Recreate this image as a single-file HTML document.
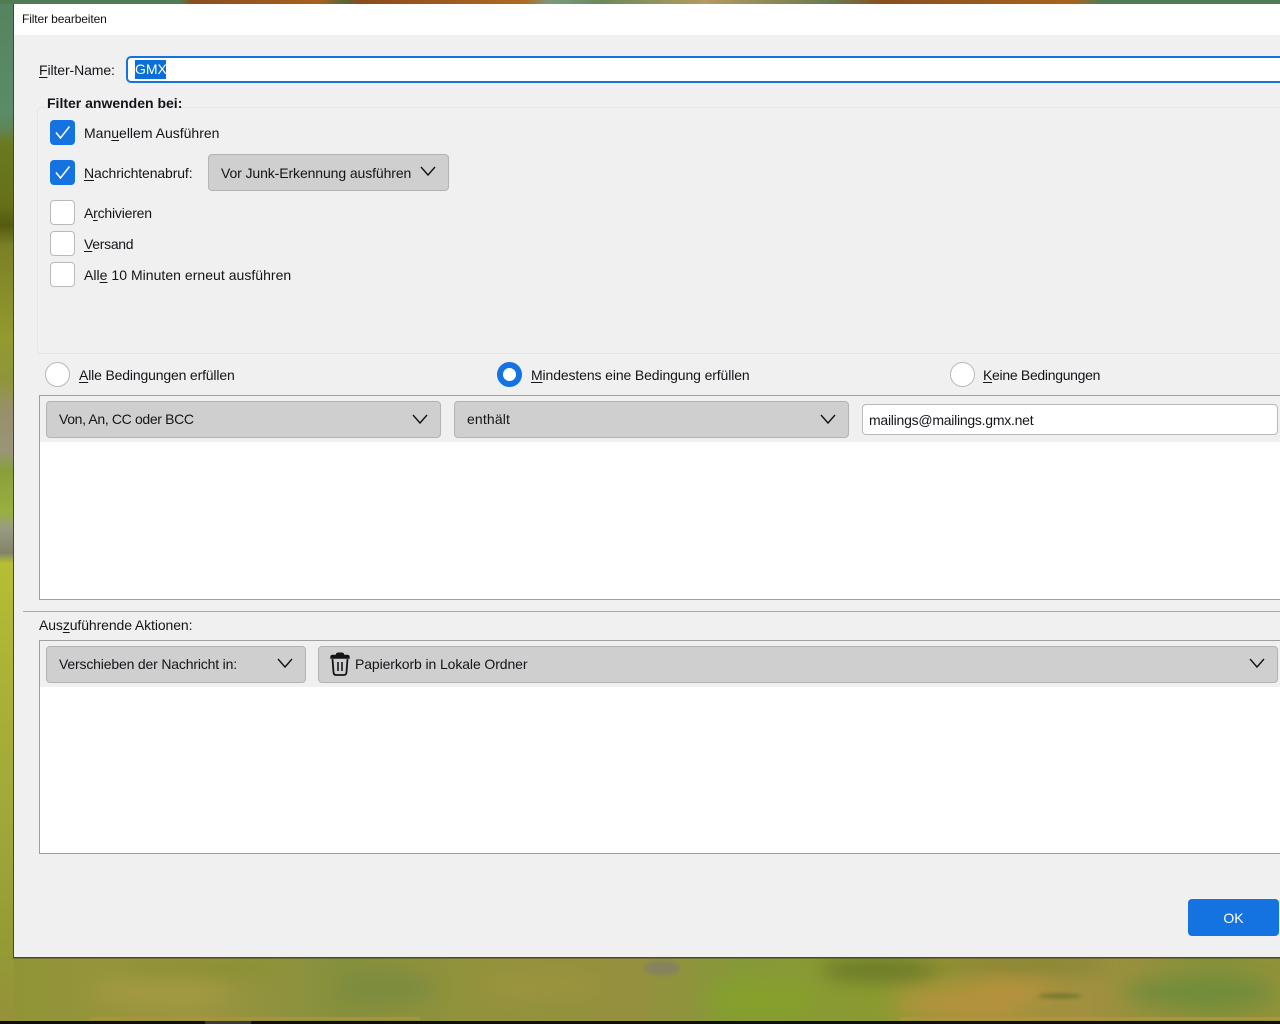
<!DOCTYPE html>
<html><head><meta charset="utf-8"><style>
html,body{margin:0;padding:0;width:1280px;height:1024px;overflow:hidden;background:#000}
body{position:relative;font-family:"Liberation Sans",sans-serif;font-size:14px;color:#15141a}
.a{position:absolute;white-space:nowrap}
.t{position:absolute;white-space:nowrap;line-height:18px}
u{text-underline-offset:2px;text-decoration-thickness:1px}
.cb{position:absolute;left:50px;width:23px;height:23px;background:#fff;border:1px solid #b9b9b9;border-radius:4px}
.cb.on{background:#1473e0;border-color:#1473e0}
.cb svg{position:absolute;left:0;top:0}
.r{position:absolute;width:23px;height:23px;border-radius:50%;background:#fff;border:1px solid #b9b9b9;top:362px}
.sel{position:absolute;background:#cfcfcf;border:1px solid #b3b3b3;border-radius:4px;box-sizing:border-box}
.sel span{position:absolute;left:12px;top:8px;line-height:18px;white-space:nowrap}
.sel svg{position:absolute}
</style></head><body>
<svg class="a" style="left:0;top:0" width="1280" height="1024" viewBox="0 0 1280 1024">
<defs>
<linearGradient id="l" gradientUnits="userSpaceOnUse" x1="0" y1="0" x2="0" y2="1024">
<stop offset="0" stop-color="#56835f"/><stop offset=".11" stop-color="#5a8c68"/><stop offset=".125" stop-color="#5f8558"/><stop offset=".14" stop-color="#6a7a20"/><stop offset=".2" stop-color="#667018"/><stop offset=".22" stop-color="#555a12"/><stop offset=".24" stop-color="#7a8024"/><stop offset=".33" stop-color="#929a30"/><stop offset=".37" stop-color="#8f9638"/><stop offset=".4" stop-color="#98906a"/><stop offset=".44" stop-color="#9a9578"/><stop offset=".46" stop-color="#88a038"/><stop offset=".5" stop-color="#98b040"/><stop offset=".515" stop-color="#9a9c80"/><stop offset=".54" stop-color="#83836a"/><stop offset=".55" stop-color="#b4bf34"/><stop offset=".66" stop-color="#aab237"/><stop offset=".8" stop-color="#a0a83a"/><stop offset=".93" stop-color="#949a34"/><stop offset="1" stop-color="#96903a"/>
</linearGradient>
<linearGradient id="t" gradientUnits="userSpaceOnUse" x1="0" y1="0" x2="1280" y2="0">
<stop offset="0" stop-color="#4f7c55"/><stop offset=".14" stop-color="#4f7c55"/><stop offset=".15" stop-color="#8a4f1d"/><stop offset=".25" stop-color="#a8601f"/><stop offset=".27" stop-color="#53683a"/><stop offset=".28" stop-color="#8a4a1c"/><stop offset=".41" stop-color="#b06a24"/><stop offset=".43" stop-color="#7a9a80"/><stop offset=".47" stop-color="#6a8a5a"/><stop offset=".55" stop-color="#b59a60"/><stop offset=".65" stop-color="#6a7a50"/><stop offset=".69" stop-color="#8a4f1d"/><stop offset=".84" stop-color="#a8641f"/><stop offset=".86" stop-color="#4f7c55"/><stop offset="1" stop-color="#4f7c55"/>
</linearGradient>
<linearGradient id="b" gradientUnits="userSpaceOnUse" x1="0" y1="0" x2="1280" y2="0">
<stop offset="0" stop-color="#8f9436"/><stop offset=".15" stop-color="#9b9540"/><stop offset=".27" stop-color="#86903c"/><stop offset=".38" stop-color="#93923c"/><stop offset=".5" stop-color="#94903e"/><stop offset=".58" stop-color="#86993a"/><stop offset=".68" stop-color="#8b9a30"/><stop offset=".78" stop-color="#a6913c"/><stop offset=".85" stop-color="#a09040"/><stop offset=".95" stop-color="#85903a"/><stop offset="1" stop-color="#90923a"/>
</linearGradient>
<filter id="bl" x="-30%" y="-60%" width="160%" height="220%"><feGaussianBlur stdDeviation="9"/></filter>
<filter id="bs"><feGaussianBlur stdDeviation="2"/></filter>
</defs>
<rect width="1280" height="1024" fill="url(#b)"/>
<rect width="14" height="1024" fill="url(#l)"/>
<rect width="1280" height="4" fill="url(#t)"/>
<g filter="url(#bl)" opacity=".85">
<ellipse cx="160" cy="992" rx="70" ry="14" fill="#a59a42"/>
<ellipse cx="200" cy="968" rx="80" ry="8" fill="#84902f"/>
<ellipse cx="385" cy="988" rx="50" ry="16" fill="#7a8b3f"/>
<ellipse cx="540" cy="985" rx="60" ry="14" fill="#9c9440"/>
<ellipse cx="760" cy="1000" rx="55" ry="22" fill="#86a12c"/>
<ellipse cx="880" cy="970" rx="60" ry="12" fill="#667628"/>
<ellipse cx="960" cy="1003" rx="65" ry="14" fill="#b7933e"/>
<ellipse cx="1010" cy="990" rx="40" ry="10" fill="#b7933e"/>
<ellipse cx="1020" cy="965" rx="90" ry="6" fill="#6f7e2e"/>
<ellipse cx="1200" cy="992" rx="75" ry="14" fill="#6c8c3a"/>
</g>
<g filter="url(#bs)">
<ellipse cx="662" cy="968" rx="18" ry="7" fill="#85825e"/>
<ellipse cx="1060" cy="996" rx="22" ry="2" fill="#6a6f2c"/>
</g>
<rect x="90" y="1017" width="330" height="3" fill="#b0903c"/>
<rect x="900" y="1017" width="380" height="3" fill="#b3923e"/>
<rect y="1021" width="1280" height="3" fill="#0f0f0a"/>
<rect x="205" y="1021" width="46" height="3" fill="#3a3a3a"/>
<rect x="13" y="4" width="1" height="954" fill="#3f4a2c"/>
<rect x="13" y="957" width="1267" height="1.5" fill="#4a4a28"/>
</svg>

<div class="a" style="left:14px;top:4px;width:1266px;height:953px;background:#f0f0f0"></div>
<div class="a" style="left:14px;top:4px;width:1266px;height:31px;background:#fff"></div>
<div class="t" style="left:22px;top:10px;font-size:12px;color:#111;letter-spacing:-.12px">Filter bearbeiten</div>

<div class="t" style="left:39px;top:61px;letter-spacing:-.1px"><u>F</u>ilter-Name:</div>
<div class="a" style="left:126px;top:56px;width:1160px;height:27px;box-sizing:border-box;background:#fff;border:2px solid #1473e0;border-radius:5px"></div>
<div class="t" style="left:135px;top:60px;width:31px;height:19px;line-height:19px;background:#0a6fd6;color:#fff;font-size:14px">GMX</div>

<div class="a" style="left:37px;top:107px;width:1250px;height:247px;box-sizing:border-box;border:1px solid #e6e6e6;border-radius:4px"></div>
<div class="t" style="left:47px;top:94px;font-weight:bold">Filter anwenden bei:</div>

<div class="cb on" style="top:120px"><svg width="23" height="23"><path d="M5 11.5 L9.5 17 L18.5 5.5" fill="none" stroke="#fff" stroke-width="1.5"/></svg></div>
<div class="t" style="left:84px;top:124px">Man<u>u</u>ellem Ausführen</div>
<div class="cb on" style="top:160px"><svg width="23" height="23"><path d="M5 11.5 L9.5 17 L18.5 5.5" fill="none" stroke="#fff" stroke-width="1.5"/></svg></div>
<div class="t" style="left:84px;top:164px;letter-spacing:-.12px"><u>N</u>achrichtenabruf:</div>
<div class="sel" style="left:208px;top:154px;width:241px;height:37px"><span style="top:9px;letter-spacing:-.1px">Vor Junk-Erkennung ausführen</span><svg style="left:211px;top:10px" width="16" height="12"><path d="M1 2 L8 10 L15 2" fill="none" stroke="#15141a" stroke-width="1.4"/></svg></div>
<div class="cb" style="top:200px"></div>
<div class="t" style="left:84px;top:204px;letter-spacing:-.2px">A<u>r</u>chivieren</div>
<div class="cb" style="top:231px"></div>
<div class="t" style="left:84px;top:235px;letter-spacing:-.3px"><u>V</u>ersand</div>
<div class="cb" style="top:262px"></div>
<div class="t" style="left:84px;top:266px;letter-spacing:.03px">All<u>e</u> 10 Minuten erneut ausführen</div>

<div class="r" style="left:45px"></div>
<div class="t" style="left:79px;top:366px;letter-spacing:-.16px"><u>A</u>lle Bedingungen erfüllen</div>
<div class="a" style="left:497px;top:362px;width:25px;height:25px;box-sizing:border-box;border-radius:50%;background:#fff;border:6px solid #1473e0"></div>
<div class="t" style="left:531px;top:366px;letter-spacing:-.12px"><u>M</u>indestens eine Bedingung erfüllen</div>
<div class="r" style="left:950px"></div>
<div class="t" style="left:983px;top:366px;letter-spacing:-.3px"><u>K</u>eine Bedingungen</div>

<div class="a" style="left:39px;top:395px;width:1250px;height:205px;box-sizing:border-box;background:#fff;border:1px solid #a0a0a0"></div>
<div class="a" style="left:40px;top:396px;width:1240px;height:46px;background:#f0f0f0"></div>
<div class="sel" style="left:46px;top:401px;width:395px;height:37px"><span style="top:8px;letter-spacing:-.35px">Von, An, CC oder BCC</span><svg style="left:365px;top:11px" width="16" height="12"><path d="M1 2 L8 10 L15 2" fill="none" stroke="#15141a" stroke-width="1.4"/></svg></div>
<div class="sel" style="left:454px;top:401px;width:395px;height:37px"><span style="top:8px;letter-spacing:.15px">enthält</span><svg style="left:365px;top:11px" width="16" height="12"><path d="M1 2 L8 10 L15 2" fill="none" stroke="#15141a" stroke-width="1.4"/></svg></div>
<div class="a" style="left:862px;top:404px;width:416px;height:31px;box-sizing:border-box;background:#fff;border:1px solid #b9b9b9;border-radius:4px"></div>
<div class="t" style="left:869px;top:411px;letter-spacing:-.25px">mailings@mailings.gmx.net</div>

<div class="a" style="left:23px;top:611px;width:1257px;height:1px;background:#a8a8a8"></div>
<div class="t" style="left:39px;top:616px;letter-spacing:-.1px">Aus<u>z</u>uführende Aktionen:</div>
<div class="a" style="left:39px;top:640px;width:1250px;height:214px;box-sizing:border-box;background:#fff;border:1px solid #a0a0a0"></div>
<div class="a" style="left:40px;top:641px;width:1240px;height:46px;background:#f0f0f0"></div>
<div class="sel" style="left:46px;top:646px;width:260px;height:37px"><span style="top:8px;letter-spacing:-.17px">Verschieben der Nachricht in:</span><svg style="left:230px;top:10px" width="16" height="12"><path d="M1 2 L8 10 L15 2" fill="none" stroke="#15141a" stroke-width="1.4"/></svg></div>
<div class="sel" style="left:318px;top:646px;width:960px;height:37px"><svg style="left:10px;top:5px" width="22" height="24" viewBox="0 0 22 24"><path d="M7.5 3 Q7.5 1.2 9.5 1.2 H12.5 Q14.5 1.2 14.5 3 M2 5 Q2 3.5 4 3.5 H18 Q20 3.5 20 5 V6 H2 Z" fill="#15141a" stroke="#15141a" stroke-width="1.4"/><path d="M3.5 7 L4.5 20 Q4.7 23 7 23 H15 Q17.3 23 17.5 20 L18.5 7" fill="none" stroke="#15141a" stroke-width="1.8"/><path d="M9 10 V19 M13 10 V19" stroke="#15141a" stroke-width="1.6"/></svg><span style="left:36px;top:8px;letter-spacing:-.1px">Papierkorb in Lokale Ordner</span><svg style="left:930px;top:10px" width="16" height="12"><path d="M1 2 L8 10 L15 2" fill="none" stroke="#15141a" stroke-width="1.4"/></svg></div>

<div class="a" style="left:1188px;top:899px;width:91px;height:37px;background:#1473e0;border-radius:4px;color:#fff;text-align:center;line-height:38px">OK</div>
</body></html>
